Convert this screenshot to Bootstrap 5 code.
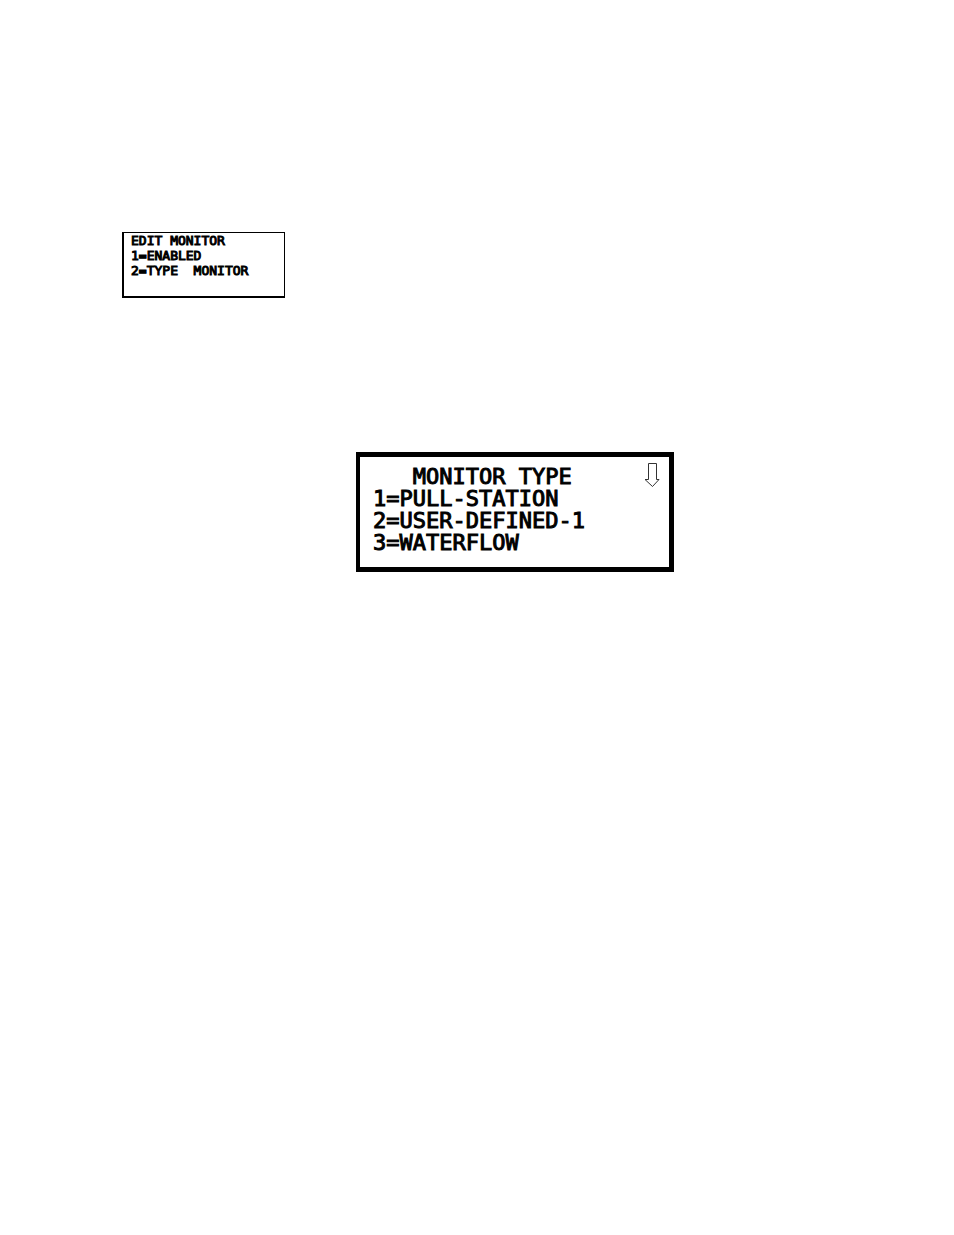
<!DOCTYPE html>
<html lang="en">
<head>
<meta charset="utf-8">
<meta name="viewport" content="width=device-width, initial-scale=1">
<title>Monitor type</title>
<link href="https://cdn.jsdelivr.net/npm/bootstrap@5.3.0/dist/css/bootstrap.min.css" rel="stylesheet">
<style>
  body { background: #fff; color: #000; }
  .manual-page { padding: 232px 46px 48px 122px; gap: 154px; }
  .lcd { border: solid #000; font-family: "DejaVu Sans Mono", monospace; font-weight: 400; -webkit-text-stroke: 1px #000; }
  .lcd-line { margin: 0; font-size: inherit; font-weight: inherit; line-height: inherit; white-space: pre; }
  .lcd-edit { width: 163px; border-width: 1px 1px 2px 2px; padding: 0 7px 18px; font-size: 13px; line-height: 15px; }
  .lcd-type { width: 318px; border-width: 5px 5px 5px 4px; padding: 9px 9px 13px 13px; font-size: 22px; line-height: 22px; }
  .scroll-down { top: 6px; right: 9px; }
</style>
</head>
<body>
<main class="manual-page d-flex flex-column">
  <section class="lcd lcd-edit align-self-start">
    <h2 class="lcd-line">EDIT MONITOR</h2>
    <p class="lcd-line">1=ENABLED</p>
    <p class="lcd-line">2=TYPE  MONITOR</p>
  </section>
  <section class="lcd lcd-type align-self-center position-relative">
    <h2 class="lcd-line">   MONITOR TYPE</h2>
    <p class="lcd-line">1=PULL-STATION</p>
    <p class="lcd-line">2=USER-DEFINED-1</p>
    <p class="lcd-line">3=WATERFLOW</p>
    <svg class="scroll-down position-absolute" width="16" height="25" viewBox="0 0 16 25" fill="none" stroke="#333" stroke-width="1" role="img" aria-label="More types below">
      <path d="M4.500 16.500V.5h8v16h2.500L8.500 23.500 1 16.500z"/>
    </svg>
  </section>
</main>
<script src="https://cdn.jsdelivr.net/npm/bootstrap@5.3.0/dist/js/bootstrap.bundle.min.js"></script>
</body>
</html>
